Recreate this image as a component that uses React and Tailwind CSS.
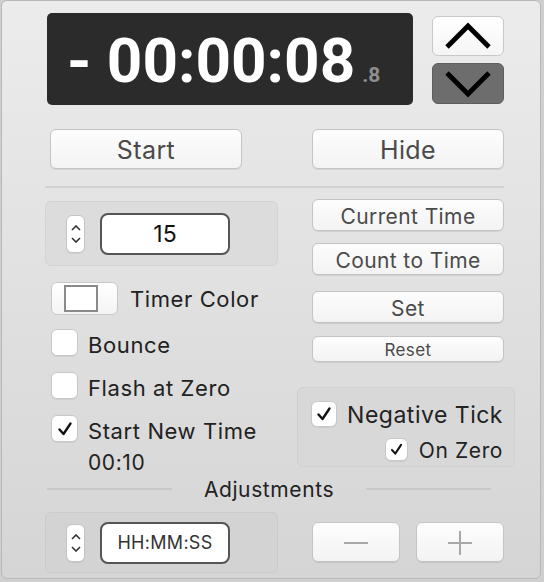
import React from "react";

const font = { fontFamily: "Inter, 'Noto Sans', sans-serif" };
const digitFont = { fontFamily: "Roboto, 'Liberation Sans', sans-serif" };

function Btn({ className = "", children }) {
  return (
    <div
      className={`flex items-center justify-center rounded-[6px] border border-[#c4c4c4] bg-gradient-to-b from-[#fdfdfd] to-[#f3f3f3] text-[#4a4a4a] shadow-[0_1px_0_rgba(0,0,0,0.08)] leading-none tracking-[0.4px] pt-[2px] ${className}`}
    >
      {children}
    </div>
  );
}

function Check({ checked, size = "w-[27px] h-[27px]", mark = 18 }) {
  return (
    <div
      className={`${size} shrink-0 flex items-center justify-center rounded-[6px] border border-[#c8c8c8] bg-white shadow-[0_1px_0_rgba(0,0,0,0.06)]`}
    >
      {checked && (
        <svg width={mark} height={mark} viewBox="0 0 18 18">
          <path d="M3.5 9.5 L7.5 14 L14.5 3.5" fill="none" stroke="#111" strokeWidth="2.4" strokeLinecap="round" strokeLinejoin="round" />
        </svg>
      )}
    </div>
  );
}

function Stepper() {
  return (
    <div className="w-[19px] h-[38px] shrink-0 rounded-[6px] border border-[#c4c4c4] bg-white flex flex-col items-center justify-center gap-[6px] shadow-[0_1px_0_rgba(0,0,0,0.06)]">
      <svg width="10" height="6" viewBox="0 0 10 6"><path d="M1 5 L5 1 L9 5" fill="none" stroke="#333" strokeWidth="1.6" /></svg>
      <svg width="10" height="6" viewBox="0 0 10 6"><path d="M1 1 L5 5 L9 1" fill="none" stroke="#333" strokeWidth="1.6" /></svg>
    </div>
  );
}

const label = "text-[22px] leading-none text-[#222] tracking-[0.6px]";
const checkLabel = "text-[22px] leading-none text-[#222] tracking-[0.6px] pt-[5px]";

export default function App() {
  return (
    <div className="w-[544px] h-[582px] bg-[#cfcfcf]" style={font}>
      <div className="w-[540px] h-[579px] ml-[1px] rounded-[6px] border border-[#b8b8b8] bg-gradient-to-b from-[#ececec] to-[#d5d5d5] overflow-hidden">
        <div className="pl-[43px] pt-[12px] w-[502px]">
          {/* Display row */}
          <div className="flex gap-[19px] ml-[2px]">
            <div className="w-[366px] h-[92px] rounded-[5px] bg-[#2b2b2b] flex items-baseline pl-[20px] pt-[17px]" style={digitFont}>
              <span className="text-white font-bold text-[62px] leading-none whitespace-pre">- 00:00:08</span>
              <span className="text-[#8e8e8e] font-bold text-[21px] leading-none ml-[7px]">.8</span>
            </div>
            <div className="flex flex-col gap-[7px] pt-[3px]">
              <div className="w-[72px] h-[40px] rounded-[6px] border border-[#c8c8c8] bg-gradient-to-b from-white to-[#f5f5f5] flex items-center justify-center">
                <svg width="48" height="28" viewBox="0 0 48 28"><path d="M3 25 L24 4 L45 25" fill="none" stroke="#000" strokeWidth="4.8" /></svg>
              </div>
              <div className="w-[72px] h-[41px] rounded-[6px] border border-[#5e5e5e] bg-[#6d6d6d] flex items-center justify-center">
                <svg width="48" height="28" viewBox="0 0 48 28"><path d="M3 3 L24 24 L45 3" fill="none" stroke="#000" strokeWidth="4.8" /></svg>
              </div>
            </div>
          </div>

          {/* Start / Hide */}
          <div className="flex justify-between mt-[24px] pl-[5px]">
            <Btn className="w-[192px] h-[40px] text-[25px] tracking-[0.2px]">Start</Btn>
            <Btn className="w-[192px] h-[40px] text-[25px] tracking-[0.2px]">Hide</Btn>
          </div>

          <div className="h-[2px] bg-[#d0d0d0] mt-[17px]" />

          {/* Middle section */}
          <div className="flex justify-between items-start mt-[11px] h-[268px]">
            <div className="w-[233px]">
              <div className="h-[65px] rounded-[6px] bg-[#dcdcdc] border border-[#d3d3d3] flex items-center pl-[20px] gap-[15px] mt-[2px]">
                <Stepper />
                <div className="w-[130px] h-[42px] rounded-[8px] border-[2px] border-[#555] bg-white flex items-center justify-center text-[23px] text-[#111] pt-[1px]">15</div>
              </div>
              <div className="flex items-center mt-[16px] pl-[6px] gap-[12px]">
                <div className="w-[67px] h-[33px] rounded-[6px] border border-[#c8c8c8] bg-gradient-to-b from-white to-[#f4f4f4] flex items-center pl-[12px]">
                  <div className="w-[34px] h-[27px] border-[2px] border-[#8a8a8a] bg-white" />
                </div>
                <span className={label}>Timer Color</span>
              </div>
              <div className="flex items-center mt-[14px] pl-[6px] gap-[10px] h-[27px]">
                <Check />
                <span className={checkLabel}>Bounce</span>
              </div>
              <div className="flex items-center mt-[16px] pl-[6px] gap-[10px] h-[27px]">
                <Check />
                <span className={checkLabel}>Flash at Zero</span>
              </div>
              <div className="flex items-center mt-[16px] pl-[6px] gap-[10px] h-[27px]">
                <Check checked />
                <span className={checkLabel}>Start New Time</span>
              </div>
              <div className="pl-[43px] text-[21px] text-[#222] leading-none mt-[10px] tracking-[0.6px]">00:10</div>
            </div>

            <div className="w-[226px] flex flex-col items-end">
              <Btn className="w-[192px] h-[32px] text-[21px]">Current Time</Btn>
              <Btn className="w-[192px] h-[32px] text-[21px] mt-[12px]">Count to Time</Btn>
              <Btn className="w-[192px] h-[32px] text-[21px] mt-[16px]">Set</Btn>
              <Btn className="w-[192px] h-[26px] text-[17px] mt-[13px]">Reset</Btn>
              <div className="w-[218px] h-[80px] mt-[25px] mr-[-11px] rounded-[6px] bg-[#d8d8d8] border border-[#d0d0d0] flex flex-col items-end pr-[11px] pt-[13px]">
                <div className="flex items-center gap-[10px]">
                  <Check checked size="w-[26px] h-[26px]" />
                  <span className="text-[23px] leading-none text-[#222] tracking-[0.5px] pt-[3px]">Negative Tick</span>
                </div>
                <div className="flex items-center gap-[11px] mt-[11px]">
                  <Check checked size="w-[23px] h-[23px]" mark={15} />
                  <span className="text-[21px] leading-none text-[#222] tracking-[0.6px] pt-[2px]">On Zero</span>
                </div>
              </div>
            </div>
          </div>

          {/* Adjustments */}
          <div className="flex items-center mt-[11px] ml-[2px] w-[444px] h-[22px]">
            <div className="w-[125px] h-[2px] bg-[#c9c9c9]" />
            <span className="flex-1 text-center text-[21px] leading-none text-[#222] tracking-[0.6px]">Adjustments</span>
            <div className="w-[125px] h-[2px] bg-[#c9c9c9]" />
          </div>

          <div className="flex justify-between mt-[12px]">
            <div className="w-[233px] h-[61px] rounded-[6px] bg-[#d3d3d3] border border-[#cbcbcb] flex items-center pl-[20px] gap-[15px]">
              <Stepper />
              <div className="w-[130px] h-[42px] rounded-[8px] border-[2px] border-[#555] bg-white flex items-center justify-center text-[18px] text-[#333] tracking-[0.3px]">HH:MM:SS</div>
            </div>
            <div className="flex gap-[16px] pt-[10px]">
              <Btn className="w-[88px] h-[40px]">
                <svg width="24" height="4" viewBox="0 0 24 4"><rect x="0" y="1" width="24" height="2" fill="#a8a8a8" /></svg>
              </Btn>
              <Btn className="w-[88px] h-[40px]">
                <svg width="24" height="24" viewBox="0 0 24 24"><rect x="0" y="11" width="24" height="2" fill="#a8a8a8" /><rect x="11" y="0" width="2" height="24" fill="#a8a8a8" /></svg>
              </Btn>
            </div>
          </div>
        </div>
      </div>
    </div>
  );
}
